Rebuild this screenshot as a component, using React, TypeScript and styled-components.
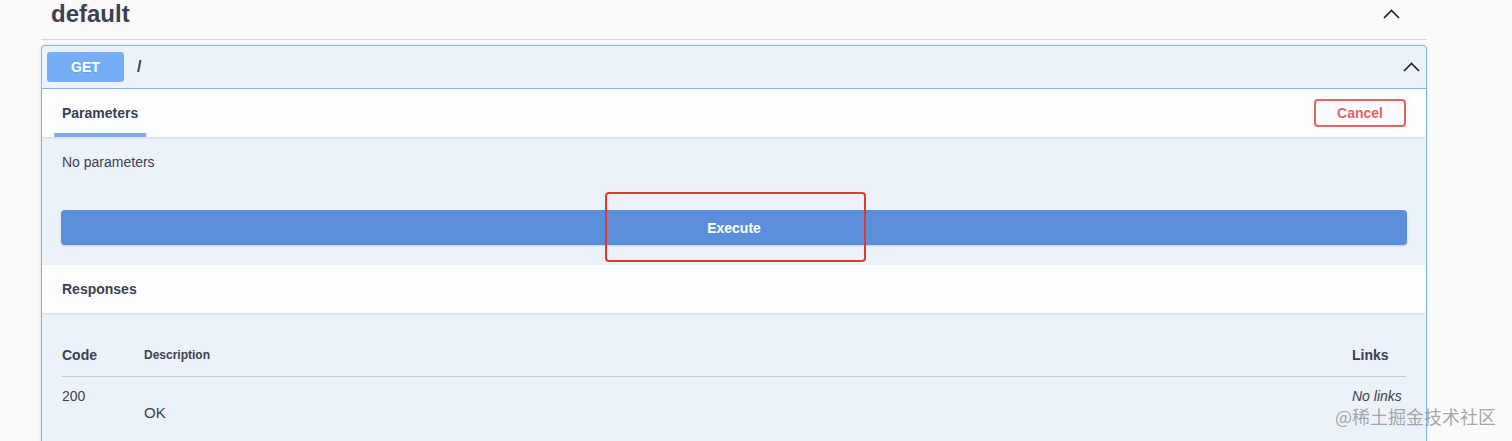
import { createGlobalStyle } from "styled-components";
import styled from "styled-components";

const GlobalStyle = createGlobalStyle`
  * { box-sizing: border-box; }
  html, body {
    margin: 0;
    background: #fafafa;
    overflow: hidden;
  }
  body {
    font-family: "Liberation Sans", Arial, sans-serif;
    color: #3b4151;
  }
`;

const Chevron = () => (
  <svg width={17} height={10} viewBox="0 0 17 10" fill="none">
    <path d="M1 9 L8.5 1.5 L16 9" stroke="#222" strokeWidth="1.6" strokeLinejoin="miter" />
  </svg>
);

const App = () => {
  return (
    <>
      <GlobalStyle />
      <Page>
        <TagHeader>
          <TagTitle>default</TagTitle>
          <Chevron />
        </TagHeader>

        <Opblock>
          <Summary>
            <MethodBadge>GET</MethodBadge>
            <PathText>/</PathText>
            <SummaryToggle>
              <Chevron />
            </SummaryToggle>
          </Summary>

          <SectionHeader>
            <Tab>Parameters</Tab>
            <CancelButton>Cancel</CancelButton>
          </SectionHeader>

          <ParamsBody>No parameters</ParamsBody>

          <ExecuteWrapper>
            <ExecuteButton>Execute</ExecuteButton>
            <Highlight />
          </ExecuteWrapper>

          <SectionHeader>
            <SectionTitle>Responses</SectionTitle>
          </SectionHeader>

          <ResponsesBody>
            <TableRow $head>
              <ColHead>Code</ColHead>
              <ColHead $small>Description</ColHead>
              <ColHead>Links</ColHead>
            </TableRow>
            <TableRow>
              <Cell>200</Cell>
              <Cell>
                <Markdown>OK</Markdown>
              </Cell>
              <Cell $italic>No links</Cell>
            </TableRow>
          </ResponsesBody>
        </Opblock>

        <Watermark>@稀土掘金技术社区</Watermark>
      </Page>
    </>
  );
};

export default App;

const Page = styled.div`
  position: relative;
  height: 441px;
  overflow: hidden;
  padding: 0 85px 0 41px;
`;

const TagHeader = styled.div`
  display: flex;
  align-items: center;
  justify-content: space-between;
  height: 40px;
  padding: 0 27px 11px 10px;
  border-bottom: 1px solid #d6d7da;
`;

const TagTitle = styled.h3`
  margin: 0;
  font-size: 24px;
  font-weight: 700;
  color: #3b4151;
`;

const Opblock = styled.div`
  margin-top: 5px;
  border: 1px solid #86b4ef;
  border-radius: 4px;
  background: #ecf2fa;
  box-shadow: 0 0 3px rgba(0, 0, 0, 0.12);
`;

const Summary = styled.div`
  display: flex;
  align-items: center;
  height: 43px;
  padding: 5px 6px 6px 5px;
  border-bottom: 1px solid #86b4ef;
`;

const MethodBadge = styled.span`
  display: flex;
  align-items: center;
  justify-content: center;
  width: 77px;
  height: 30px;
  border-radius: 3px;
  background: #76aef6;
  color: #fff;
  font-size: 14px;
  font-weight: 700;
  text-shadow: 0 1px 0 rgba(0, 0, 0, 0.1);
`;

const PathText = styled.span`
  margin-left: 13px;
  font-size: 16px;
  font-weight: 700;
  color: #3b4151;
`;

const SummaryToggle = styled.span`
  display: flex;
  margin-left: auto;
`;

const SectionHeader = styled.div`
  display: flex;
  align-items: center;
  justify-content: space-between;
  height: 48px;
  padding: 0 20px;
  background: rgba(255, 255, 255, 0.85);
  box-shadow: 0 1px 2px rgba(0, 0, 0, 0.1);
`;

const Tab = styled.div`
  position: relative;
  align-self: stretch;
  display: flex;
  align-items: center;
  font-size: 14px;
  font-weight: 700;

  &::after {
    content: "";
    position: absolute;
    bottom: 0;
    left: 50%;
    width: 120%;
    height: 4px;
    transform: translateX(-50%);
    background: #79aef3;
  }
`;

const SectionTitle = styled.h4`
  margin: 0;
  font-size: 14px;
  font-weight: 700;
`;

const CancelButton = styled.button`
  width: 92px;
  height: 28px;
  border: 2px solid #e6645e;
  border-radius: 4px;
  background: transparent;
  color: #e6645e;
  font-family: inherit;
  font-size: 14px;
  font-weight: 700;
`;

const ParamsBody = styled.p`
  margin: 0;
  padding: 15px 20px 18px;
  font-size: 14px;
  line-height: 20px;
`;

const ExecuteWrapper = styled.div`
  position: relative;
  padding: 20px 19px;
`;

const ExecuteButton = styled.button`
  display: block;
  width: 100%;
  height: 35px;
  border: none;
  border-radius: 4px;
  background: #5b8fdc;
  box-shadow: 0 1px 2px rgba(0, 0, 0, 0.15);
  color: #fff;
  font-family: inherit;
  font-size: 14px;
  font-weight: 700;
`;

const Highlight = styled.div`
  position: absolute;
  top: 2px;
  left: 563px;
  width: 261px;
  height: 70px;
  border: 2px solid #e0392f;
  border-radius: 4px;
`;

const ResponsesBody = styled.div`
  padding: 22px 20px 40px;
`;

const TableRow = styled.div<{ $head?: boolean }>`
  display: grid;
  grid-template-columns: 82px 1fr 54px;
  align-items: ${({ $head }) => ($head ? "center" : "start")};
  padding: ${({ $head }) => ($head ? "12px 0 13px" : "11px 0 0")};
  border-bottom: ${({ $head }) => ($head ? "1px solid #c3c8d0" : "none")};
`;

const ColHead = styled.div<{ $small?: boolean }>`
  font-size: ${({ $small }) => ($small ? "12px" : "14px")};
  font-weight: 700;
  line-height: 16px;
`;

const Cell = styled.div<{ $italic?: boolean }>`
  font-size: 14px;
  line-height: 16px;
  font-style: ${({ $italic }) => ($italic ? "italic" : "normal")};
  white-space: nowrap;
`;

const Markdown = styled.p`
  margin: 16px 0 0;
  font-size: 15px;
  line-height: 18px;
`;

const Watermark = styled.div`
  position: absolute;
  top: 405px;
  right: 16px;
  font-family: "Noto Sans CJK SC", sans-serif;
  font-size: 18px;
  line-height: 22px;
  color: rgba(130, 130, 130, 0.7);
`;
